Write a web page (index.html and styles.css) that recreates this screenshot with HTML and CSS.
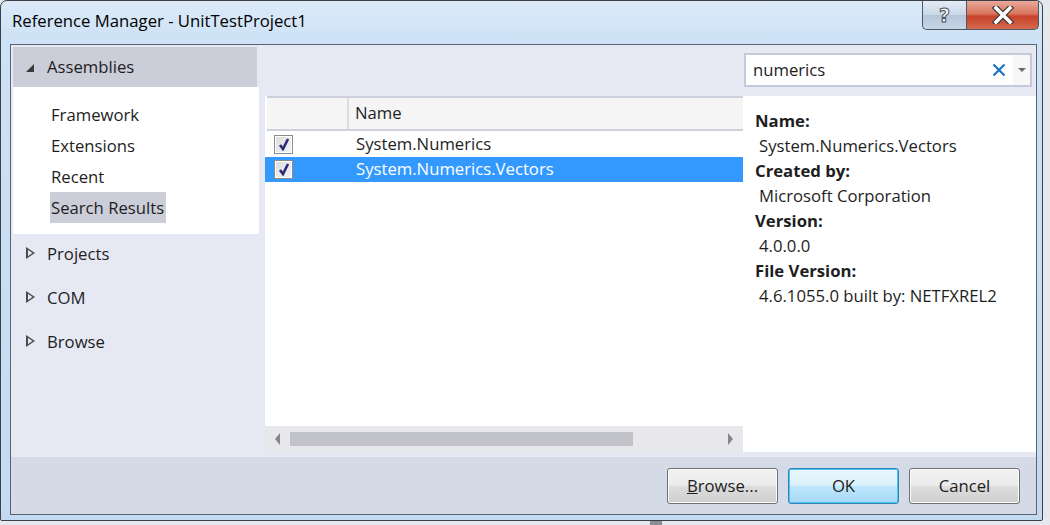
FILE: index.html
```html
<!DOCTYPE html>
<html>
<head>
<meta charset="utf-8">
<title>Reference Manager</title>
<link rel="stylesheet" href="styles.css">
</head>
<body>
<div class="desk">
  <div class="window">
    <div class="titlebar">
      <div class="title">Reference Manager - UnitTestProject1</div>
      <div class="caption">
        <div class="cap help">?</div>
        <div class="cap close">
          <svg width="26" height="18" viewBox="0 0 26 18"><path d="M6 2 L20 16 M20 2 L6 16" stroke="#3a3a3a" stroke-width="6" stroke-linecap="square"/><path d="M6 2 L20 16 M20 2 L6 16" stroke="#ffffff" stroke-width="3.6" stroke-linecap="square"/></svg>
        </div>
      </div>
    </div>
    <div class="client">
      <div class="main">
        <div class="nav">
          <div class="nav-head expanded">
            <span class="tri-down"></span><span>Assemblies</span>
          </div>
          <div class="nav-sub">
            <div class="sub-item">Framework</div>
            <div class="sub-item">Extensions</div>
            <div class="sub-item">Recent</div>
            <div class="sub-item sel">Search Results</div>
          </div>
          <div class="nav-head"><span class="tri-right"></span><span>Projects</span></div>
          <div class="nav-head"><span class="tri-right"></span><span>COM</span></div>
          <div class="nav-head"><span class="tri-right"></span><span>Browse</span></div>
        </div>
        <div class="content">
          <div class="search-row">
            <div class="search">
              <span class="search-text">numerics</span>
              <span class="search-x">
                <svg width="14" height="14" viewBox="0 0 14 14"><path d="M1.5 1.5 L12.5 12.5 M12.5 1.5 L1.5 12.5" stroke="#1e72c6" stroke-width="2.2"/></svg>
              </span>
              <span class="search-drop"><span class="drop-arrow"></span></span>
            </div>
          </div>
          <div class="panes">
            <div class="grid">
              <div class="grid-head">
                <div class="col-check"></div>
                <div class="col-name">Name</div>
              </div>
              <div class="rows">
                <div class="row">
                  <span class="check"><svg width="12" height="13" viewBox="0 0 12 13"><path d="M2 7 L5 11 L10 1" fill="none" stroke="#2a2a7c" stroke-width="2.6"/></svg></span>
                  <span class="row-name">System.Numerics</span>
                </div>
                <div class="row selected">
                  <span class="check"><svg width="12" height="13" viewBox="0 0 12 13"><path d="M2 7 L5 11 L10 1" fill="none" stroke="#2a2a7c" stroke-width="2.6"/></svg></span>
                  <span class="row-name">System.Numerics.Vectors</span>
                </div>
              </div>
              <div class="hscroll">
                <span class="arrow-left"></span>
                <div class="track"><div class="thumb"></div></div>
                <span class="arrow-right"></span>
              </div>
            </div>
            <div class="details">
              <div class="d-label">Name:</div>
              <div class="d-value">System.Numerics.Vectors</div>
              <div class="d-label">Created by:</div>
              <div class="d-value">Microsoft Corporation</div>
              <div class="d-label">Version:</div>
              <div class="d-value">4.0.0.0</div>
              <div class="d-label">File Version:</div>
              <div class="d-value">4.6.1055.0 built by: NETFXREL2</div>
            </div>
          </div>
        </div>
      </div>
      <div class="footer">
        <button class="btn"><u>B</u>rowse...</button>
        <button class="btn default">OK</button>
        <button class="btn">Cancel</button>
      </div>
    </div>
  </div>
</div>
</body>
</html>
```
FILE: styles.css
```css
* { box-sizing: border-box; }
html, body { margin: 0; padding: 0; }
body {
  width: 1050px;
  height: 525px;
  overflow: hidden;
  background: #e9ecef;
  font-family: "Open Sans", "Noto Sans", "DejaVu Sans", sans-serif;
  color: #1e1e1e;
}
.desk {
  width: 1050px;
  height: 525px;
  background: linear-gradient(90deg, #e5e8ec 0, #e5e8ec 650px, #8a8e94 650px, #8a8e94 662px, #e5e8ec 662px);
}
.window {
  width: 1043px;
  height: 521px;
  border: 1px solid #3c4048;
  border-radius: 7px 7px 2px 2px;
  background: linear-gradient(180deg, #dceaf8 0, #cde2f6 40px, #c4daf1 100%);
  display: flex;
  flex-direction: column;
  padding: 0 5px 5px 9px;
}
.titlebar {
  height: 43px;
  display: flex;
  align-items: flex-start;
  justify-content: space-between;
}
.title {
  font-size: 16.7px;
  padding: 8px 0 0 2px;
  color: #000;
}
.caption {
  display: flex;
  margin-right: -2px;
}
.cap {
  height: 29px;
  border: 1px solid #4d5866;
  border-top: none;
  display: flex;
  align-items: center;
  justify-content: center;
}
.help {
  width: 44px;
  border-radius: 0 0 0 5px;
  border-right: none;
  background: linear-gradient(180deg, #e4ecf5 0, #cad7e6 50%, #b6c6d9 51%, #c7d6e7 100%);
  color: #fff;
  font-family: "DejaVu Sans", sans-serif;
  font-weight: bold;
  font-size: 19px;
  -webkit-text-stroke: 1px #4a4f57;
}
.close {
  width: 73px;
  border-radius: 0 0 5px 0;
  background: linear-gradient(180deg, #e9a99b 0, #d9765f 45%, #c8432a 55%, #d36a4e 100%);
}
.client {
  flex: 1;
  border: 1px solid #5c6370;
  background: #e6e9f4;
  display: flex;
  flex-direction: column;
}
.main {
  flex: 1;
  display: flex;
  padding: 2px 0 0 2px;
}
.nav {
  width: 246px;
  display: flex;
  flex-direction: column;
}
.nav-head {
  height: 44px;
  display: flex;
  align-items: center;
  font-size: 16.7px;
  padding-left: 13px;
  padding-bottom: 10px;
  width: 244px;
}
.nav-head.expanded {
  height: 40px;
  padding-bottom: 1px;
  background: #cbcdd9;
}
.tri-down {
  width: 0; height: 0;
  border-left: 8px solid transparent;
  border-bottom: 8px solid #3b3b3b;
  margin: 3px 13px 0 0;
}
.tri-right {
  width: 9px;
  height: 12px;
  margin: 0 12px 0 0;
  position: relative;
  clip-path: polygon(0 0, 100% 50%, 0 100%);
  background: #4b4b4b;
}
.tri-right::after {
  content: "";
  position: absolute;
  left: 1.5px; top: 2.6px;
  width: 5px; height: 6.8px;
  background: #e6e9f4;
  clip-path: polygon(0 0, 100% 50%, 0 100%);
}
.nav-sub {
  background: #fff;
  height: 147px;
  padding: 12px 0 0 37px;
  margin-bottom: 2px;
}
.sub-item {
  height: 31px;
  font-size: 16.7px;
  line-height: 31px;
  padding-left: 1px;
  display: table;
  padding-right: 2px;
}
.sub-item.sel { background: #cbcdd9; }
.content {
  flex: 1;
  display: flex;
  flex-direction: column;
  padding-left: 6px;
}
.search-row {
  display: flex;
  justify-content: flex-end;
  padding: 6px 4px 0 0;
  height: 49px;
}
.search {
  width: 288px;
  height: 34px;
  border: 2px solid #c5cad8;
  background: #fff;
  display: flex;
  align-items: center;
}
.search-text {
  flex: 1;
  font-size: 16.7px;
  padding-left: 7px;
  padding-bottom: 1px;
}
.search-x {
  width: 24px;
  display: flex;
  align-items: center;
  justify-content: center;
  margin-right: 2px;
}
.search-drop {
  width: 17px;
  height: 100%;
  background: #f7f7f8;
  display: flex;
  align-items: center;
  justify-content: center;
}
.drop-arrow {
  width: 0; height: 0;
  border-left: 4px solid transparent;
  border-right: 4px solid transparent;
  border-top: 4px solid #6b6b6b;
}
.panes {
  height: 356px;
  display: flex;
}
.grid {
  width: 478px;
  background: #fff;
  display: flex;
  flex-direction: column;
}
.grid-head {
  height: 35px;
  display: flex;
  background: #f5f5f5;
  border-top: 2px solid #cdd0dd;
  border-bottom: 2px solid #cdd0dd;
  margin-left: 2px;
}
.col-check {
  width: 82px;
  border-right: 2px solid #dcdde3;
}
.col-name {
  padding-left: 6px;
  font-size: 16.7px;
  line-height: 30px;
}
.rows {
  flex: 1;
  padding-top: 1px;
}
.row {
  height: 25px;
  display: flex;
  align-items: center;
  font-size: 16.7px;
}
.row.selected {
  background: #3399ff;
  color: #fff;
}
.check {
  width: 19px;
  height: 19px;
  margin: 0 63px 0 9px;
  border: 1px solid #8c8c8c;
  box-shadow: inset 0 0 0 1px #fff;
  background: linear-gradient(135deg, #dcdcdc, #f4f4f4);
  display: flex;
  align-items: center;
  justify-content: center;
}
.row-name { padding-bottom: 2px; }
.hscroll {
  height: 26px;
  background: #e8e8ec;
  display: flex;
  align-items: center;
  padding: 0 10px 0 10px;
}
.arrow-left {
  width: 0; height: 0;
  border-top: 6px solid transparent;
  border-bottom: 6px solid transparent;
  border-right: 5px solid #858590;
}
.arrow-right {
  width: 0; height: 0;
  border-top: 6px solid transparent;
  border-bottom: 6px solid transparent;
  border-left: 5px solid #858590;
}
.track {
  flex: 1;
  padding: 0 0 0 10px;
  margin-right: 10px;
}
.thumb {
  width: 343px;
  height: 14px;
  background: #c2c3c9;
}
.details {
  flex: 1;
  background: #fff;
  padding: 12px 0 0 12px;
  font-size: 16.7px;
  line-height: 25px;
}
.d-label { font-weight: bold; }
.d-value { padding-left: 4px; }
.footer {
  height: 57px;
  background: #d5dae7;
  display: flex;
  justify-content: flex-end;
  align-items: flex-start;
  gap: 10px;
  padding: 11px 16px 0 0;
}
.btn {
  width: 111px;
  height: 36px;
  border: 1px solid #707070;
  border-radius: 3px;
  background: linear-gradient(180deg, #f2f2f2 0, #ebebeb 50%, #dddddd 51%, #cfcfcf 100%);
  box-shadow: inset 0 0 0 1px #fcfcfc;
  font-family: "Open Sans", "Noto Sans", sans-serif;
  font-size: 16.7px;
  color: #1e1e1e;
  padding: 0 0 2px 0;
}
.btn.default {
  border-color: #3c7fb1;
  background: linear-gradient(180deg, #eaf6fd 0, #d9f0fc 50%, #bee6fd 51%, #a7d9f5 100%);
  box-shadow: inset 0 0 0 1px #48c6f5;
}
```
